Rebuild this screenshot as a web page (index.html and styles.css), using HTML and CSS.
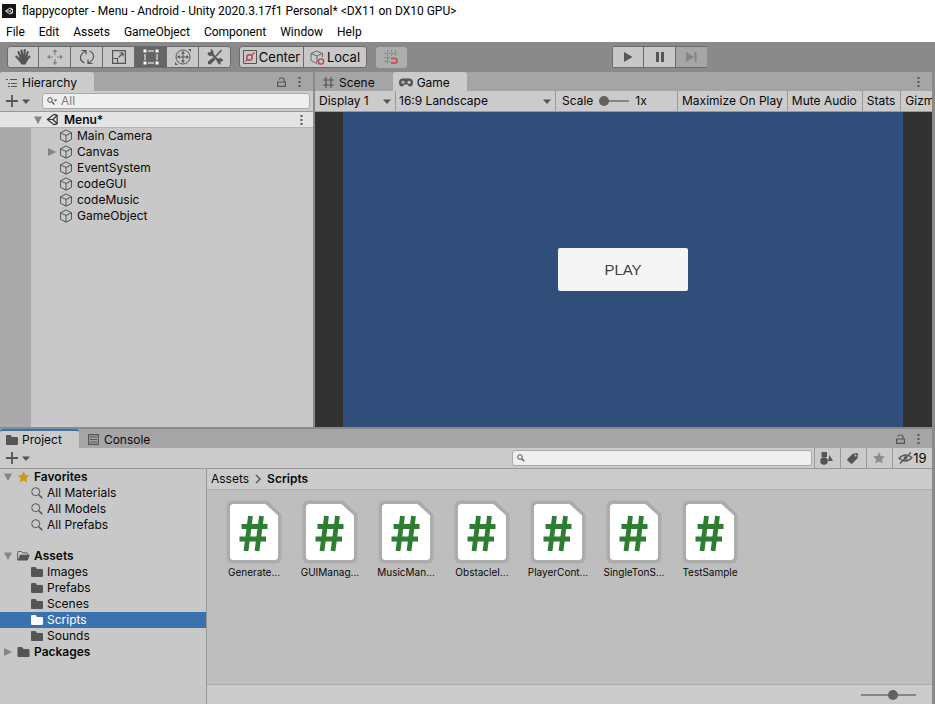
FILE: index.html
```html
<!DOCTYPE html>
<html lang="en">
<head>
<meta charset="utf-8">
<title>flappycopter - Menu - Android - Unity</title>
<link rel="stylesheet" href="styles.css">
</head>
<body>
<svg class="sprite" aria-hidden="true">
  <symbol id="cube" viewBox="0 0 14 14"><path d="M7 1 12.5 3.7V10.3L7 13.2 1.500 10.300V3.700ZM1.500 3.700 7 6.500 12.500 3.700M7 6.500V13.200" fill="none" stroke="currentColor" stroke-linejoin="round"/></symbol>
  <symbol id="unity" viewBox="0 0 14 14"><path d="M8.500 1.500 1.500 7 8.500 12.500M8.500 1.500 12 2.500V11.500L8.500 12.500M1.500 7H7.500M7.500 7 12 2.500M7.500 7 12 11.500" fill="none" stroke="currentColor" stroke-width="1.300"/></symbol>
  <symbol id="folder" viewBox="0 0 12 10"><path d="M0 1Q0 0 1 0H4.500L6 2H11Q12 2 12 3V9Q12 10 11 10H1Q0 10 0 9Z" fill="currentColor"/></symbol>
  <symbol id="folder-open" viewBox="0 0 14 11"><path d="M.5 10V1.500Q.5.500 1.500.500H4.500L6 2H10.500Q11.500 2 11.500 3V4" fill="none" stroke="currentColor"/><path d="M3.200 4.200H14L11.500 10.500H.5Z" fill="currentColor"/></symbol>
  <symbol id="search" viewBox="0 0 12 12"><circle cx="4.700" cy="4.700" r="4" fill="none" stroke="currentColor"/><path d="M7.800 7.800 11.300 11.300" stroke="currentColor" stroke-width="1.600"/></symbol>
  <symbol id="search-menu" viewBox="0 0 11 8"><circle cx="3" cy="3" r="2.300" fill="none" stroke="currentColor"/><path d="M4.700 4.700 7.300 7.500" stroke="currentColor" stroke-width="1.200"/><path d="M6.500 2.500H10.500L8.500 4.500Z" fill="currentColor"/></symbol>
  <symbol id="down" viewBox="0 0 8 5"><path d="M0 .500H8L4 5Z" fill="currentColor"/></symbol>
  <symbol id="fold-down" viewBox="0 0 8 8"><path d="M0 .5H8L4 8Z" fill="currentColor"/></symbol>
  <symbol id="fold-right" viewBox="0 0 8 8"><path d="M0 0V8L8 4Z" fill="currentColor"/></symbol>
  <symbol id="plus" viewBox="0 0 12 12"><path d="M6 0V12M0 6H12" stroke="currentColor" stroke-width="1.800"/></symbol>
  <symbol id="lock" viewBox="0 0 9 10"><path d="M.6 5H8.400V9.300H.600ZM7 5V2.500Q7 1 5.500 1H3.600Q2.200 1 2.200 2.600" fill="none" stroke="currentColor" stroke-width="1.200"/></symbol>
  <symbol id="dots" viewBox="0 0 3 12"><path d="M.5 1H2.500V3H.500ZM.5 5H2.500V7H.500ZM.5 9H2.500V11H.500Z" fill="currentColor"/></symbol>
  <symbol id="star" viewBox="0 0 12 12"><path d="M6 0 7.700 4 12 4.400 8.800 7.300 9.700 11.600 6 9.400 2.300 11.600 3.200 7.300 0 4.400 4.300 4Z" fill="currentColor"/></symbol>
  <symbol id="grid" viewBox="0 0 11 11"><path d="M3 0V11M8 0V11M0 3H11M0 8H11" stroke="currentColor" stroke-width="1.200"/></symbol>
  <symbol id="script" viewBox="0 0 56 64"><path d="M7 .5H41L55.500 14V57Q55.500 63.500 49 63.500H7Q.5 63.500.500 57V7Q.5.500 7 .500Z" fill="#acacac"/><path d="M7.500 4H39.500L52 15.500V56.500Q52 60 48.500 60H7.500Q4 60 4 56.500V7.500Q4 4 7.500 4Z" fill="#fff"/><path d="M24.500 16 20 51M35.500 16 31 51M15.500 26.500H41.500M13.500 39H40" fill="none" stroke="#2f7d33" stroke-width="4.800"/></symbol>
</svg>

<header class="titlebar">
  <svg class="app-icon" viewBox="0 0 14 14" aria-hidden="true"><rect width="14" height="14" fill="#161616"/><path d="M8 4 3.500 7 8 10 10.500 9V5ZM4 7H7.500L10 5M7.500 7 10 9" fill="none" stroke="#ddd"/></svg>
  <span>flappycopter - Menu - Android - Unity 2020.3.17f1 Personal* &lt;DX11 on DX10 GPU&gt;</span>
</header>

<nav class="menubar" aria-label="Main menu">
  <button>File</button><button>Edit</button><button>Assets</button><button>GameObject</button><button>Component</button><button>Window</button><button>Help</button>
</nav>

<div class="toolbar">
  <div class="segment tools">
    <button aria-label="Hand"><svg width="16" height="16" viewBox="0 0 16 16"><path d="M3.500 3 6 9M6.500 1.500 7.500 8M9.700 1 9.300 8M12.700 3 11 9M1.300 7.500 5 11.500M14.500 7.500 11.500 11" fill="none" stroke="currentColor" stroke-width="2.100" stroke-linecap="round"/><path d="M5 7H11.800L12.800 11 10.500 15.500H6.500L3.500 11Z" fill="currentColor"/></svg></button>
    <button aria-label="Move"><svg width="16" height="16" viewBox="0 0 16 16" class="muted"><path d="M8 2V6M8 10V14M2 8H6M10 8H14" stroke="currentColor" stroke-width="1.200"/><path d="M5.500 3 8 0 10.500 3ZM5.500 13 8 16 10.500 13ZM3 5.500 0 8 3 10.500ZM13 5.500 16 8 13 10.500Z" fill="currentColor"/></svg></button>
    <button aria-label="Rotate"><svg width="16" height="16" viewBox="0 0 16 16" fill="none" stroke="currentColor" stroke-width="1.200"><path d="M5.500 14Q1 12 1.500 8 2 4.500 6.500 2M2.500 1.500H7V5.500M10.500 2Q15 4 14.500 8 14 11.500 9.500 14M13.500 14.500H9V10.500"/></svg></button>
    <button aria-label="Scale"><svg width="14" height="14" viewBox="0 0 14 14" fill="none" stroke="currentColor" stroke-width="1.200"><path d="M.6 8.500V.6H13.400V13.400H5.500M.6 8.500H5.500V13.400H.6ZM6.500 7.500 11 3M7.500 3H11V6.500"/></svg></button>
    <button class="active" aria-label="Rect" aria-pressed="true"><svg width="16" height="16" viewBox="0 0 16 16"><path d="M2 5V11M14 5V11M5 2H11M5 14H11" stroke="currentColor"/><path d="M.5.500H3.500V3.500H.500ZM12.500.500H15.500V3.500H12.500ZM.5 12.500H3.500V15.500H.500ZM12.500 12.500H15.500V15.500H12.500Z" fill="currentColor"/></svg></button>
    <button aria-label="Transform"><svg width="18" height="16" viewBox="0 0 18 16"><g fill="none" stroke="currentColor"><circle cx="9" cy="8" r="7"/><path d="M9 3V13M4 8H14"/></g><path d="M7 4.500 9 2 11 4.500ZM7 11.500 9 14 11 11.500ZM5.500 6 3 8 5.500 10ZM12.500 6 15 8 12.500 10ZM14 0H17V3ZM1 13V16H4Z" fill="currentColor"/></svg></button>
    <button aria-label="Custom tools"><svg width="16" height="16" viewBox="0 0 16 16"><path d="M4 4 13 13.500" stroke="currentColor" stroke-width="2.400"/><path d="M14.500 1 9 7" stroke="currentColor" stroke-width="1.500"/><path d="M6.300 8.500 8.300 10.500 3.500 15.500 1 15 1 12.500ZM3.500 0 4 3 .8 3.500Q0 7 4 7L6.500 5Q7 1 3.500 0ZM10 11 12.500 9Q16 9 16 12L13.500 12.500 13.500 15.500Q10 15 10 11Z" fill="currentColor"/></svg></button>
  </div>
  <div class="segment pivot">
    <button><svg width="14" height="14" viewBox="0 0 14 14" fill="none"><path d="M.5.500H13.500V13.500H.5Z" stroke="#555"/><circle cx="6.500" cy="7.500" r="2.700" stroke="#bd4149" stroke-width="1.400"/><path d="M2.500 11.500 4.500 9.500M8.500 5.500 11.500 2.500" stroke="#bd4149" stroke-width="1.200"/></svg><span>Center</span></button>
    <button><svg width="15" height="15" viewBox="0 0 15 15" fill="none"><path d="M7 13.500 1 10.500V3.500L6.500 1 12.500 3.500V7M1 3.500 7 6 12.500 3.500M7 6V13" stroke="#666"/><circle cx="11" cy="11.500" r="2.600" stroke="#bd4149" stroke-width="1.400"/><path d="M8 14.500 9 13.500" stroke="#bd4149"/></svg><span>Local</span></button>
  </div>
  <button class="snap" disabled aria-label="Grid snapping"><svg width="15" height="15" viewBox="0 0 15 15" fill="none"><path d="M3.500 0V14M7.500 0V6M11.500 0V6M0 3.500H13M0 7.500H6M0 11.500H6" stroke="#888" stroke-dasharray="3 1"/><path d="M7 8.500H10.500Q13 8.500 13 10.700 13 13 10.500 13H7" stroke="#b85c64" stroke-width="2"/></svg></button>
  <div class="segment playback">
    <button aria-label="Play"><svg width="10" height="12" viewBox="0 0 10 12"><path d="M1 1 9.500 6 1 11Z" fill="currentColor"/></svg></button>
    <button aria-label="Pause"><svg width="8" height="10" viewBox="0 0 8 10"><path d="M0 0H3V10H0ZM5 0H8V10H5Z" fill="currentColor"/></svg></button>
    <button disabled aria-label="Step"><svg width="11" height="12" viewBox="0 0 11 12"><path d="M0 1 8 6 0 11ZM8.500 1H10.500V11H8.500Z" fill="currentColor"/></svg></button>
  </div>
</div>

<main class="workspace">
  <div class="upper">
    <section class="panel hierarchy" aria-label="Hierarchy">
      <div class="tabs">
        <button class="tab selected"><svg width="12" height="10" viewBox="0 0 12 10"><path d="M0 1.500H2M4 1.500H11M2 5.500H4M5 5.500H11M2 8.500H4M5 8.500H11" stroke="currentColor"/></svg><span>Hierarchy</span></button>
        <div class="tab-actions"><svg width="9" height="10"><use href="#lock"/></svg><svg width="3" height="12"><use href="#dots"/></svg></div>
      </div>
      <div class="bar">
        <button class="add" aria-label="Create"><svg width="12" height="12"><use href="#plus"/></svg><svg width="8" height="5"><use href="#down"/></svg></button>
        <label class="search hierarchy-search"><svg width="11" height="8"><use href="#search-menu"/></svg><input type="text" placeholder="All" aria-label="Search hierarchy"></label>
      </div>
      <div class="scene-row"><svg class="fold" width="8" height="8"><use href="#fold-down"/></svg><svg class="scene-icon" width="13" height="13"><use href="#unity"/></svg><b>Menu*</b><svg class="more" width="3" height="12"><use href="#dots"/></svg></div>
      <div class="scene-body">
        <ul class="tree objects">
          <li><i></i><svg width="14" height="14"><use href="#cube"/></svg>Main Camera</li>
          <li><i><svg width="8" height="8"><use href="#fold-right"/></svg></i><svg width="14" height="14"><use href="#cube"/></svg>Canvas</li>
          <li><i></i><svg width="14" height="14"><use href="#cube"/></svg>EventSystem</li>
          <li><i></i><svg width="14" height="14"><use href="#cube"/></svg>codeGUI</li>
          <li><i></i><svg width="14" height="14"><use href="#cube"/></svg>codeMusic</li>
          <li><i></i><svg width="14" height="14"><use href="#cube"/></svg>GameObject</li>
        </ul>
      </div>
    </section>

    <section class="panel game" aria-label="Game">
      <div class="tabs">
        <button class="tab scene-tab"><svg width="11" height="11"><use href="#grid"/></svg><span>Scene</span></button>
        <button class="tab selected game-tab"><svg width="14" height="9" viewBox="0 0 14 9"><path d="M4 .500H10Q14 .500 14 4.500 14 8.500 11 8.500 9.500 8.500 8.500 6.500H5.500Q4.500 8.500 3 8.500 0 8.500 0 4.500 0 .500 4 .500Z" fill="currentColor"/><path d="M4 2.500V6M2.200 4.200H5.800" stroke="#ccc"/><circle cx="10" cy="4.200" r="1.500" fill="#ccc"/></svg><span>Game</span></button>
        <div class="tab-actions"><svg width="3" height="12"><use href="#dots"/></svg></div>
      </div>
      <div class="bar game-bar">
        <div class="drop display"><select aria-label="Display"><option>Display 1</option></select><svg width="8" height="5"><use href="#down"/></svg></div>
        <div class="drop aspect"><select aria-label="Aspect ratio"><option>16:9 Landscape</option></select><svg width="8" height="5"><use href="#down"/></svg></div>
        <div class="scale"><label for="scale">Scale</label><input id="scale" type="range" min="1" max="5" step="0.1" value="1"><output for="scale">1x</output></div>
        <button>Maximize On Play</button><button>Mute Audio</button><button>Stats</button><button class="gizmos">Gizmos</button>
      </div>
      <div class="viewport"><div class="stage"><button>PLAY</button></div></div>
    </section>
  </div>

  <section class="panel project" aria-label="Project">
    <div class="tabs">
      <button class="tab selected focused"><svg width="12" height="10"><use href="#folder"/></svg><span>Project</span></button>
      <button class="tab console-tab"><svg width="11" height="11" viewBox="0 0 11 11"><path d="M.6.600H10.400V10.400H.600ZM2 3H9M2 5.500H9M2 8H9" fill="none" stroke="currentColor" stroke-width="1.200"/></svg><span>Console</span></button>
      <div class="tab-actions"><svg width="9" height="10"><use href="#lock"/></svg><svg width="3" height="12"><use href="#dots"/></svg></div>
    </div>
    <div class="bar project-bar">
      <button class="add" aria-label="Create asset"><svg width="12" height="12"><use href="#plus"/></svg><svg width="8" height="5"><use href="#down"/></svg></button>
      <label class="search project-search"><svg width="8" height="8" viewBox="0 0 8 8"><circle cx="3" cy="3" r="2.300" fill="none" stroke="currentColor"/><path d="M4.700 4.700 7.300 7.300" stroke="currentColor" stroke-width="1.300"/></svg><input type="text" aria-label="Search project"></label>
      <div class="filters">
        <button aria-label="Filter by type"><svg width="13" height="13" viewBox="0 0 13 13" fill="currentColor"><path d="M1.500 0H7V5H1.500ZM9.500 3 13 9H8Z"/><circle cx="4" cy="9" r="3.800"/></svg></button>
        <button aria-label="Filter by label"><svg width="11" height="11" viewBox="0 0 11 11"><path d="M5.500 1 9.500 0Q11 0 11 1.500L10.300 5.500 5 10.700Q4.300 11 3.700 10.500L.4 7.200Q0 6.500.4 6Z" fill="currentColor"/><circle cx="8.500" cy="2.600" r="1" fill="#cbcbcb"/></svg></button>
        <button class="pale" aria-label="Favorite"><svg width="12" height="12"><use href="#star"/></svg></button>
        <button class="hidden-count"><svg width="15" height="12" viewBox="0 0 15 12"><path d="M1 6.500Q7 0 14 5.500 8 12 1 6.500ZM2 11.500 13 .500" fill="none" stroke="currentColor" stroke-width="1.300"/><circle cx="7.500" cy="6" r="1.800" fill="currentColor"/></svg><span>19</span></button>
      </div>
    </div>
    <div class="browser">
      <ul class="tree folders">
        <li class="root"><i><svg width="8" height="8"><use href="#fold-down"/></svg></i><svg class="gold" width="12" height="12"><use href="#star"/></svg><b>Favorites</b></li>
        <li><svg width="12" height="12"><use href="#search"/></svg>All Materials</li>
        <li><svg width="12" height="12"><use href="#search"/></svg>All Models</li>
        <li><svg width="12" height="12"><use href="#search"/></svg>All Prefabs</li>
        <li class="root assets"><i><svg width="8" height="8"><use href="#fold-down"/></svg></i><svg width="13" height="10"><use href="#folder-open"/></svg><b>Assets</b></li>
        <li><svg width="12" height="10"><use href="#folder"/></svg>Images</li>
        <li><svg width="12" height="10"><use href="#folder"/></svg>Prefabs</li>
        <li><svg width="12" height="10"><use href="#folder"/></svg>Scenes</li>
        <li class="current"><svg width="12" height="10"><use href="#folder"/></svg>Scripts</li>
        <li><svg width="12" height="10"><use href="#folder"/></svg>Sounds</li>
        <li class="root"><i><svg width="8" height="8"><use href="#fold-right"/></svg></i><svg width="13" height="10"><use href="#folder"/></svg><b>Packages</b></li>
      </ul>
      <div class="content">
        <div class="crumbs"><span>Assets</span><svg width="6" height="10" viewBox="0 0 6 10"><path d="M1 1 5 5 1 9" fill="none" stroke="currentColor" stroke-width="1.400"/></svg><b>Scripts</b></div>
        <ul class="files">
          <li><svg width="56" height="64"><use href="#script"/></svg><span>Generate...</span></li>
          <li><svg width="56" height="64"><use href="#script"/></svg><span>GUIManag...</span></li>
          <li><svg width="56" height="64"><use href="#script"/></svg><span>MusicMan...</span></li>
          <li><svg width="56" height="64"><use href="#script"/></svg><span>ObstacleI...</span></li>
          <li><svg width="56" height="64"><use href="#script"/></svg><span>PlayerCont...</span></li>
          <li><svg width="56" height="64"><use href="#script"/></svg><span>SingleTonS...</span></li>
          <li><svg width="56" height="64"><use href="#script"/></svg><span>TestSample</span></li>
        </ul>
        <div class="status"><input type="range" min="0" max="100" value="60" aria-label="Icon size"></div>
      </div>
    </div>
  </section>
</main>
</body>
</html>
```

FILE: styles.css
```css
* { box-sizing: border-box; }

body {
  margin: 0;
  height: 100vh;
  display: flex;
  flex-direction: column;
  overflow: hidden;
  background: #8a8a8a;
  color: #090909;
  font: 12px/16px Inter, sans-serif;
}

.sprite { position: absolute; width: 0; height: 0; }
svg { flex: none; display: block; color: #555; }
button, input, select {
  margin: 0;
  padding: 0;
  border: 0;
  border-radius: 0;
  background: none;
  color: inherit;
  font: inherit;
}
ul { list-style: none; margin: 0; padding: 0; }

/* Window chrome */
.titlebar, .menubar {
  display: flex;
  align-items: center;
  background: #fff;
  color: #000;
  font-family: Roboto, "Noto Sans", sans-serif;
}
.titlebar { height: 22px; gap: 6px; padding-left: 2px; white-space: nowrap; }
.app-icon { width: 14px; height: 14px; }
.menubar { height: 20px; gap: 14px; padding-left: 6px; }

/* Main toolbar */
.toolbar { display: flex; align-items: center; height: 30px; padding-left: 7px; }
.segment { display: flex; height: 22px; border: 1px solid #6b6b6b; border-radius: 3px; background: #c8c8c8; }
.segment button { display: flex; align-items: center; justify-content: center; width: 32px; }
.segment button:first-child { width: 30px; }
.segment button + button { border-left: 1px solid #6b6b6b; }
.segment .active { background: #656565; }
.segment .active svg { color: #fff; }
.segment .muted { color: #858585; }
.pivot { margin-left: 8px; font-size: 13px; }
.pivot button, .pivot button:first-child { width: 63px; gap: 2px; }
.snap { display: flex; align-items: center; justify-content: center; width: 31px; height: 21px; margin-left: 9px; border-radius: 3px; background: #adadad; }
.playback { margin-left: 205px; background: none; border-right: 0; border-radius: 3px 0 0 3px; }
.playback button { background: #c8c8c8; }
.playback button:disabled { background: #a6a6a6; }
.playback button:disabled svg { color: #858585; }

/* Panels */
.workspace { flex: 1; min-height: 0; display: flex; flex-direction: column; gap: 2px; padding-right: 3px; }
.upper { flex: 355 1 0; min-height: 0; display: flex; gap: 2px; }
.panel { display: flex; flex-direction: column; min-width: 0; background: #c8c8c8; }
.hierarchy { flex: 313 1 0; }
.game { flex: 617 1 0; overflow: hidden; }
.project { flex: 275 1 0; min-height: 0; }

.tabs { display: flex; height: 19px; background: #a5a5a5; }
.tab { display: flex; align-items: center; gap: 4px; padding: 2px 17px 0 6px; border-radius: 3px 3px 0 0; }
.tab.selected { background: #cbcbcb; }
.tab.focused { border-top: 2px solid #3a72b0; padding-top: 1px; }
.scene-tab { gap: 5px; padding: 2px 18px 0 8px; }
.console-tab { gap: 5px; padding-left: 9px; }
.tab-actions { display: flex; align-items: center; gap: 12px; margin-left: auto; padding-right: 12px; }

.bar { display: flex; align-items: center; height: 21px; background: #cbcbcb; border-bottom: 1px solid #999; }
.add { display: flex; align-items: center; gap: 4px; padding-left: 6px; }
.search { display: flex; align-items: center; gap: 3px; height: 16px; padding: 0 4px; border: 1px solid #aaa; border-radius: 3px; background: #efefef; }
.search input { flex: 1; min-width: 0; outline: 0; }
.search input::placeholder { color: #7c7c7c; opacity: 1; }
.hierarchy-search { flex: 1; margin: 0 3px 0 12px; }
.project-search { width: 300px; margin-left: auto; }

/* Trees */
.tree li { display: flex; align-items: center; height: 16px; }
.tree i { flex: none; display: flex; }
.scene-row { display: flex; align-items: center; height: 16px; padding-left: 34px; background: #e4e4e4; border-bottom: 1px solid #b5b5b5; }
.scene-row b { margin-left: 5px; font-weight: 600; }
.scene-row .fold { margin-right: 4px; color: #858585; }
.scene-row .scene-icon { color: #333; }
.scene-row .more { margin-left: auto; margin-right: 10px; }
.scene-body { flex: 1; display: flex; }
.scene-body::before { content: ""; width: 31px; background: #aaa; }
.objects li { gap: 4px; padding-left: 17px; }
.objects i { width: 7px; }
.objects i svg, .folders i svg { color: #858585; }

/* Game view */
.game-bar { align-items: stretch; }
.game-bar > * { flex: none; border-right: 1px solid #999; }
.game-bar > button { padding: 0 4px; }
.game-bar > button + button { padding: 0 5px 0 4px; }
.game-bar > .gizmos { border: 0; }
.drop { position: relative; display: flex; }
.drop select { appearance: none; width: 100%; padding-left: 4px; outline: 0; }
.drop svg { position: absolute; right: 4px; top: 8px; pointer-events: none; }
.display { width: 81px; }
.aspect { width: 160px; }
.aspect select { padding-left: 3px; }
.scale { display: flex; align-items: center; gap: 6px; width: 122px; padding-left: 6px; }
.scale input { width: 30px; }

input[type="range"] { appearance: none; height: 12px; background: linear-gradient(#868686, #868686) center / 100% 2px no-repeat; }
input[type="range"]::-webkit-slider-thumb { appearance: none; width: 10px; height: 10px; border-radius: 50%; background: #616161; }

.viewport { flex: 1; display: flex; padding: 0 29px 0 28px; background: #313131; }
.stage { flex: 1; display: flex; align-items: center; justify-content: center; background: #314d79; }
.stage button { width: 130px; height: 43px; border-radius: 2px; background: #f5f5f5; color: #414141; font: 15px/20px "Liberation Sans", sans-serif; }

/* Project browser */
.project-bar { flex: none; }
.filters { display: flex; align-self: stretch; margin-left: 2px; }
.filters button { display: flex; align-items: center; justify-content: center; width: 26px; padding-right: 2px; border-left: 1px solid #999; }
.filters .pale svg { color: #8c8c8c; }
.filters .hidden-count { width: 40px; padding: 0; font-size: 13px; }
.browser { flex: 1; min-height: 0; display: flex; }
.folders { width: 207px; border-right: 1px solid #999; }
.folders li { gap: 4px; padding-left: 31px; }
.folders .root { padding-left: 4px; }
.folders .root i { width: 9px; }
.folders b, .crumbs b { font-weight: 600; }
.folders .gold { width: 13px; color: #c99a13; }
.folders .assets { margin-top: 15px; }
.folders .current { background: #3a72b0; color: #fff; }
.folders .current svg { color: #fff; }
.content { flex: 1; min-width: 0; display: flex; flex-direction: column; background: #bebebe; }
.crumbs { display: flex; align-items: center; gap: 6px; height: 21px; padding-left: 4px; background: #cbcbcb; border-bottom: 1px solid #adadad; }
.files { flex: 1; display: flex; flex-wrap: wrap; align-content: flex-start; padding: 10px 9px; }
.files li { display: flex; flex-direction: column; align-items: center; width: 76px; font-size: 10px; }
.status { display: flex; align-items: center; justify-content: flex-end; height: 20px; padding-right: 16px; background: #cbcbcb; border-top: 1px solid #adadad; }
.status input { width: 55px; }
```
